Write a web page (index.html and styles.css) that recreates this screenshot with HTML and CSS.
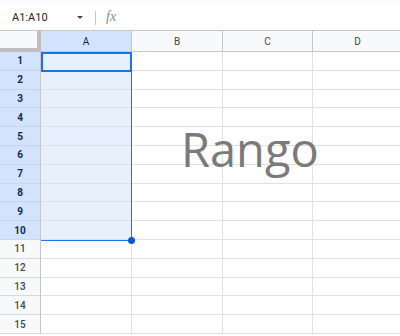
FILE: index.html
```html
<!DOCTYPE html>
<html lang="es">

<head>
    <meta charset="utf-8">
    <title>Hoja de cálculo</title>
    <link rel="stylesheet" href="styles.css">
</head>

<body>

    <div class="top-strip"></div>

    <div class="formula-bar">
        <span class="name-box">A1:A10</span>
        <span class="caret"></span>
        <span class="divider"></span>
        <span class="fx">fx</span>
    </div>

    <div class="sheet">
        <div class="grid">
            <div class="corner"></div>
            <div class="col-head sel-head">A</div>
            <div class="col-head">B</div>
            <div class="col-head">C</div>
            <div class="col-head">D</div>

            <div class="row-head sel-head">1</div><div class="cell sel"></div><div class="cell"></div><div class="cell"></div><div class="cell"></div>
            <div class="row-head sel-head">2</div><div class="cell sel"></div><div class="cell"></div><div class="cell"></div><div class="cell"></div>
            <div class="row-head sel-head">3</div><div class="cell sel"></div><div class="cell"></div><div class="cell"></div><div class="cell"></div>
            <div class="row-head sel-head">4</div><div class="cell sel"></div><div class="cell"></div><div class="cell"></div><div class="cell"></div>
            <div class="row-head sel-head">5</div><div class="cell sel"></div><div class="cell"></div><div class="cell"></div><div class="cell"></div>
            <div class="row-head sel-head">6</div><div class="cell sel"></div><div class="cell"></div><div class="cell"></div><div class="cell"></div>
            <div class="row-head sel-head">7</div><div class="cell sel"></div><div class="cell"></div><div class="cell"></div><div class="cell"></div>
            <div class="row-head sel-head">8</div><div class="cell sel"></div><div class="cell"></div><div class="cell"></div><div class="cell"></div>
            <div class="row-head sel-head">9</div><div class="cell sel"></div><div class="cell"></div><div class="cell"></div><div class="cell"></div>
            <div class="row-head sel-head">10</div><div class="cell sel"></div><div class="cell"></div><div class="cell"></div><div class="cell"></div>
            <div class="row-head">11</div><div class="cell"></div><div class="cell"></div><div class="cell"></div><div class="cell"></div>
            <div class="row-head">12</div><div class="cell"></div><div class="cell"></div><div class="cell"></div><div class="cell"></div>
            <div class="row-head">13</div><div class="cell"></div><div class="cell"></div><div class="cell"></div><div class="cell"></div>
            <div class="row-head">14</div><div class="cell"></div><div class="cell"></div><div class="cell"></div><div class="cell"></div>
            <div class="row-head">15</div><div class="cell"></div><div class="cell"></div><div class="cell"></div><div class="cell"></div>
        </div>

        <!-- contorno del rango seleccionado -->
        <div class="range"></div>
        <div class="active-cell"></div>
        <div class="handle"></div>

        <div class="label">Rango</div>
    </div>

</body>

</html>
```

FILE: styles.css
```css
body {
    margin: 0;
    padding: 0;
    font-family: Roboto, "Liberation Sans", sans-serif;
    background-color: #ffffff;
    width: 400px;
    height: 336px;
    overflow: hidden;
}

.top-strip {
    height: 5px;
    background-color: #f9fbfd;
}

.formula-bar {
    height: 25px;
    display: flex;
    align-items: center;
    background-color: #ffffff;
}

.name-box {
    font-size: 11px;
    color: #1f1f1f;
    margin-left: 12px;
    width: 64px;
}

.caret {
    width: 0;
    height: 0;
    border-left: 3.5px solid transparent;
    border-right: 3.5px solid transparent;
    border-top: 3.5px solid #444746;
    margin-left: 1px;
}

.divider {
    width: 1px;
    height: 14px;
    background-color: #c7c7c7;
    margin-left: 12px;
}

.fx {
    font-family: "Liberation Serif", serif;
    font-style: italic;
    font-size: 14px;
    color: #8a8a8a;
    margin-left: 10px;
    margin-top: -2px;
}

.sheet {
    position: relative;
}

.grid {
    display: grid;
    grid-template-columns: 41px 91px 91px 90px 90px;
    grid-template-rows: 22px;
    grid-auto-rows: 18.8px;
}

.grid > div {
    box-sizing: border-box;
    border-right: 1px solid #e1e1e1;
    border-bottom: 1px solid #e1e1e1;
}

.corner {
    background-color: #f8f9fa;
    border-top: 1px solid #c7c7c7;
    border-right: 4px solid #bfbfbf !important;
    border-bottom: 4px solid #bfbfbf !important;
}

.col-head {
    background-color: #f8f9fa;
    border-top: 1px solid #c7c7c7;
    border-right-color: #c7c7c7 !important;
    border-bottom-color: #c4c7c5 !important;
    font-size: 10px;
    color: #444746;
    display: flex;
    align-items: center;
    justify-content: center;
}

.row-head {
    background-color: #f8f9fa;
    border-right-color: #c4c7c5 !important;
    border-bottom-color: #d9d9d9 !important;
    font-size: 10px;
    font-weight: 500;
    color: #444746;
    display: flex;
    align-items: center;
    justify-content: center;
}

.sel-head {
    background-color: #d3e3fd;
    color: #0a2a5c;
}

.row-head.sel-head {
    font-weight: 700;
    border-bottom-color: #c9d7ee !important;
}

.cell.sel {
    background-color: #e8f0fe;
}

.range {
    position: absolute;
    left: 41px;
    top: 22px;
    width: 90px;
    height: 188px;
    border-right: 1px solid #1a73e8;
    border-bottom: 1px solid #1a73e8;
}

.active-cell {
    position: absolute;
    left: 41px;
    top: 22px;
    width: 87px;
    height: 16px;
    border: 2px solid #1a73e8;
}

.handle {
    position: absolute;
    left: 128px;
    top: 207px;
    width: 7px;
    height: 7px;
    border-radius: 50%;
    background-color: #0b57d0;
}

.label {
    position: absolute;
    left: 181px;
    top: 96px;
    font-family: "Open Sans", sans-serif;
    font-size: 47px;
    line-height: 1;
    color: #7a7a7a;
}
```
